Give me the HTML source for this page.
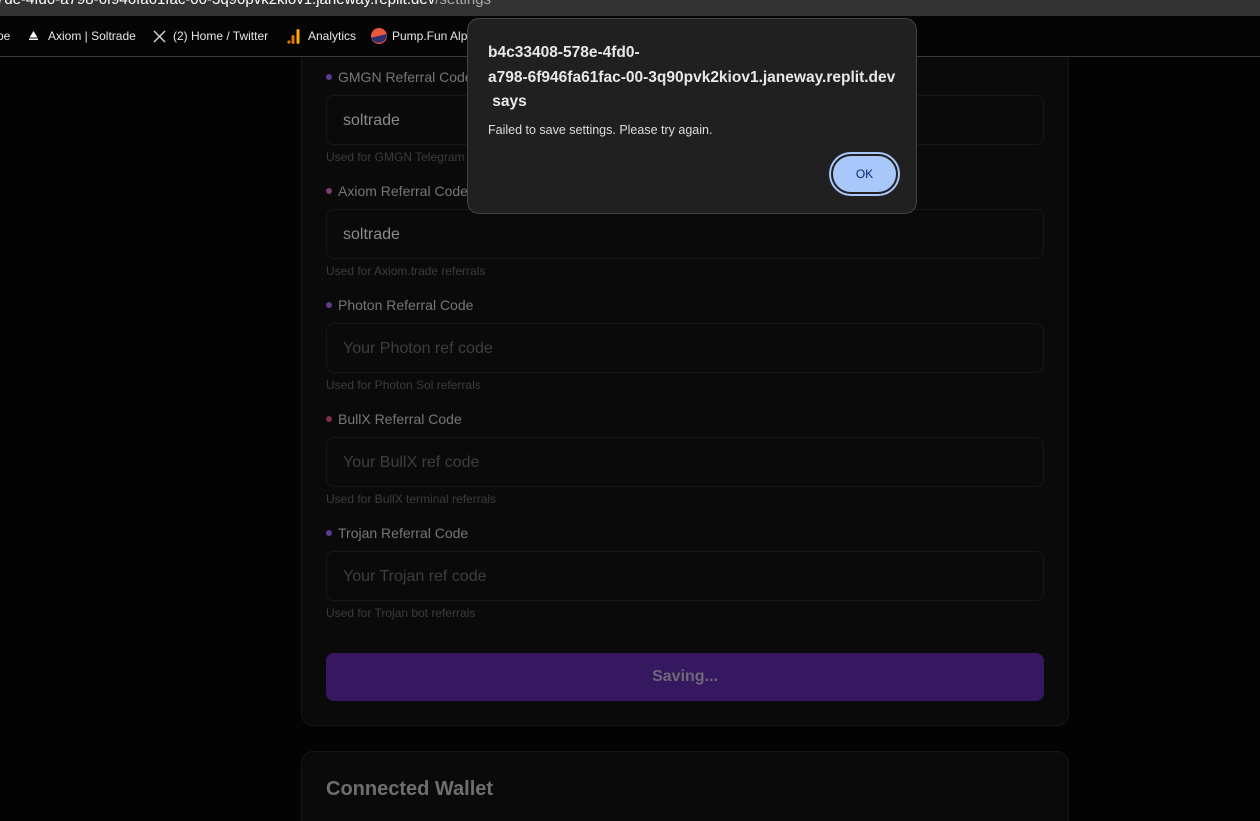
<!DOCTYPE html>
<html><head><meta charset="utf-8"><style>
*{box-sizing:border-box;margin:0;padding:0}
html,body{width:1260px;height:821px;overflow:hidden}
body{background:#030303;font-family:"Liberation Sans",Arial,sans-serif;position:relative}
.top{position:absolute;left:0;top:0;width:1260px;height:16px;background:#333;overflow:hidden;z-index:5}
.top span{position:absolute;left:-4px;top:-9px;font-size:15px;color:#fff;white-space:nowrap}
.top span i{color:#aaa;font-style:normal}
.bm{position:absolute;left:0;top:16px;width:1260px;height:41px;background:#050505;border-bottom:1px solid #3a3a3a;font-size:12px;color:#e6e6e6;z-index:5}
.bm .t{position:absolute;top:13px;white-space:nowrap}
.bm svg{position:absolute}
.card{position:absolute;left:301px;width:768px;background:#0a0a0a;border:1px solid #161616;border-radius:12px}
.lbl{position:absolute;left:326px;font-size:14px;color:#767676}
.lbl b{display:inline-block;width:6px;height:6px;border-radius:50%;margin-right:6px;vertical-align:2px}
.inp{position:absolute;left:326px;width:718px;height:50px;border:1px solid #171717;border-radius:8px;background:#0a0a0a;font-size:16px;padding:16px 0 0 16px;color:#3e3e3e}
.inp.v{color:#8a8a8a}
.hint{position:absolute;left:326px;font-size:12px;color:#3c3c3c}
.btn{position:absolute;left:326px;top:653px;width:718px;height:48px;background:#351860;border-radius:8px;color:#6f6a78;font-weight:bold;font-size:16px;text-align:center;line-height:48px}
.dlg{position:absolute;left:467px;top:18px;width:450px;height:196px;background:#202020;border:1px solid #444;border-radius:12px;color:#eee;z-index:10}
.dlg h1{position:absolute;left:20px;top:22px;font-size:15.5px;line-height:24.5px;font-weight:bold;color:#e8e8e8;white-space:nowrap}
.dlg p{position:absolute;left:20px;top:104px;font-size:12.5px;color:#ddd}
.ok{position:absolute;left:363px;top:135px;width:67px;height:40px;border-radius:20px;background:#a8c7fa;border:2px solid #202020;box-shadow:0 0 0 2px #a8c7fa;color:#062e6f;font-size:12px;text-align:center;line-height:36px}
</style></head><body>
<div class="top"><span>7de-4fd0-a798-6f946fa61fac-00-3q90pvk2kiov1.janeway.replit.dev<i>/settings</i></span></div>
<div class="bm">
<div class="t" style="left:-3px">pe</div>
<svg style="left:28px;top:14px" width="11" height="11" viewBox="0 0 11 11"><path d="M5.5 1L9.5 7.5H1.5Z" fill="#fff"/><rect x="1" y="8.5" width="9" height="1.5" fill="#fff"/></svg>
<div class="t" style="left:48px">Axiom | Soltrade</div>
<svg style="left:153px;top:14px" width="13" height="13" viewBox="0 0 13 13"><path d="M1 1L12 12M12 1L1 12" stroke="#ddd" stroke-width="1.3"/></svg>
<div class="t" style="left:173px">(2) Home / Twitter</div>
<svg style="left:287px;top:12px" width="14" height="16" viewBox="0 0 14 16"><circle cx="2" cy="14" r="1.6" fill="#e37400"/><rect x="4.5" y="7" width="3" height="9" rx="1.5" fill="#e37400"/><rect x="9.5" y="1" width="3" height="15" rx="1.5" fill="#f9ab00"/></svg>
<div class="t" style="left:308px">Analytics</div>
<svg style="left:371px;top:12px" width="16" height="16" viewBox="0 0 16 16"><circle cx="8" cy="8" r="8" fill="#eb5a3c"/><path d="M0.3 9.8L15.7 6A8 8 0 0 1 0.3 9.8Z" fill="#2e2e6e"/></svg>
<div class="t" style="left:392px">Pump.Fun Alp</div>
</div>

<div class="card" style="top:30px;height:696px"></div>
<div class="card" style="top:751px;height:100px"></div>
<div style="position:absolute;left:326px;top:778px;font-size:20px;font-weight:bold;color:#6e6e6e">Connected Wallet</div>

<div class="lbl" style="top:69px"><b style="background:#5b3d8c"></b>GMGN Referral Code</div>
<div class="inp v" style="top:95px">soltrade</div>
<div class="hint" style="top:150px">Used for GMGN Telegram</div>

<div class="lbl" style="top:183px"><b style="background:#7a3d6e"></b>Axiom Referral Code</div>
<div class="inp v" style="top:209px">soltrade</div>
<div class="hint" style="top:264px">Used for Axiom.trade referrals</div>

<div class="lbl" style="top:297px"><b style="background:#5b3d8c"></b>Photon Referral Code</div>
<div class="inp" style="top:323px">Your Photon ref code</div>
<div class="hint" style="top:378px">Used for Photon Sol referrals</div>

<div class="lbl" style="top:411px"><b style="background:#7a3050"></b>BullX Referral Code</div>
<div class="inp" style="top:437px">Your BullX ref code</div>
<div class="hint" style="top:492px">Used for BullX terminal referrals</div>

<div class="lbl" style="top:525px"><b style="background:#5b3d8c"></b>Trojan Referral Code</div>
<div class="inp" style="top:551px">Your Trojan ref code</div>
<div class="hint" style="top:606px">Used for Trojan bot referrals</div>

<div class="btn">Saving...</div>

<div class="dlg">
<h1>b4c33408-578e-4fd0-<br>a798-6f946fa61fac-00-3q90pvk2kiov1.janeway.replit.dev<br>&nbsp;says</h1>
<p>Failed to save settings. Please try again.</p>
<div class="ok">OK</div>
</div>
</body></html>
